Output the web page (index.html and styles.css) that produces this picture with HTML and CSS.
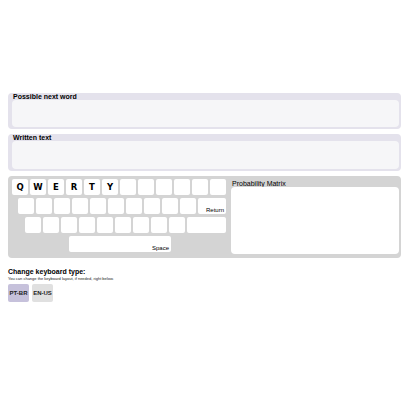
FILE: index.html
```html
<!DOCTYPE html>
<html>
<head>
<meta charset="utf-8">
<link rel="stylesheet" href="styles.css">
</head>
<body>
<div class="page">
  <section class="panel">
    <div class="panel-label">Possible next word</div>
    <div class="panel-box"></div>
  </section>
  <section class="panel panel-b">
    <div class="panel-label">Written text</div>
    <div class="panel-box"></div>
  </section>
  <section class="board">
    <div class="keyboard">
      <div class="row">
        <div class="key">Q</div><div class="key">W</div><div class="key">E</div><div class="key">R</div><div class="key">T</div><div class="key">Y</div>
        <div class="key"></div><div class="key"></div><div class="key"></div><div class="key"></div><div class="key"></div><div class="key"></div>
      </div>
      <div class="row row2">
        <div class="key"></div><div class="key"></div><div class="key"></div><div class="key"></div><div class="key"></div>
        <div class="key"></div><div class="key"></div><div class="key"></div><div class="key"></div><div class="key"></div>
        <div class="key key-return">Return</div>
      </div>
      <div class="row row3">
        <div class="key"></div><div class="key"></div><div class="key"></div><div class="key"></div><div class="key"></div>
        <div class="key"></div><div class="key"></div><div class="key"></div><div class="key"></div>
        <div class="key key-wide"></div>
      </div>
      <div class="row row4">
        <div class="key key-space">Space</div>
      </div>
    </div>
    <div class="matrix">
      <div class="matrix-label">Probability Matrix</div>
      <div class="matrix-box"></div>
    </div>
  </section>
  <section class="layout">
    <div class="layout-title">Change keyboard type:</div>
    <div class="layout-sub">You can change the keyboard layout, if needed, right below.</div>
    <div class="layout-buttons">
      <button class="lbtn lbtn-active">PT-BR</button>
      <button class="lbtn">EN-US</button>
    </div>
  </section>
</div>
</body>
</html>
```

FILE: styles.css
```css
* { box-sizing: border-box; }
html, body { margin: 0; padding: 0; background: #ffffff; }
body { font-family: "Liberation Sans", Arial, sans-serif; color: #000; }
.page { padding: 93px 4px 0 8px; }

.panel {
  height: 36px;
  background: #e4e2ec;
  border-radius: 4px;
  padding: 0 2px 2px 4px;
  display: flex;
  flex-direction: column;
}
.panel-b { margin-top: 5px; height: 37px; }
.panel-label {
  font-size: 7px;
  font-weight: bold;
  line-height: 7px;
  padding-left: 1px;
  color: #000;
}
.panel-box {
  flex: 1;
  background: #f6f6f8;
  border-radius: 4px;
}

.board {
  margin-top: 5px;
  height: 82px;
  background: #d4d4d4;
  border-radius: 4px;
  padding: 3px 2px 4px 4px;
  display: flex;
  gap: 5px;
}
.keyboard { display: flex; flex-direction: column; gap: 3px; }
.row { display: flex; gap: 2px; height: 16px; }
.row2 { padding-left: 6px; }
.row3 { padding-left: 13px; }
.row4 { padding-left: 57px; }
.key {
  width: 16px;
  height: 16px;
  background: #ffffff;
  border-radius: 2px;
  font-family: "DejaVu Sans", "Liberation Sans", sans-serif;
  font-size: 8.5px;
  font-weight: bold;
  display: flex;
  align-items: center;
  justify-content: center;
  color: #000;
}
.key-return, .key-space {
  font-family: "Liberation Sans", Arial, sans-serif;
  font-size: 6px;
  font-weight: normal;
  align-items: flex-end;
  justify-content: flex-end;
  padding: 0 2px 1px 0;
}
.key-return { width: 28px; }
.key-wide { width: 39px; }
.key-space { width: 102px; }

.matrix { flex: 1; display: flex; flex-direction: column; }
.matrix-label {
  font-size: 7px;
  line-height: 7px;
  padding: 1px 0 0 1px;
  height: 8px;
  color: #000;
}
.matrix-box {
  flex: 1;
  background: #ffffff;
  border-radius: 4px;
}

.layout { margin-top: 10px; }
.layout-title { font-size: 7px; font-weight: bold; line-height: 8px; color: #000; }
.layout-sub { font-size: 4px; line-height: 6px; color: #222; }
.layout-buttons { display: flex; gap: 3px; margin-top: 2px; }
.lbtn {
  width: 21px;
  height: 18px;
  border: none;
  border-radius: 2px;
  padding: 0;
  font-family: "Liberation Sans", Arial, sans-serif;
  font-size: 6px;
  font-weight: bold;
  color: #222;
  background: #e0e0e0;
}
.lbtn-active { background: #c6c1db; }
```
